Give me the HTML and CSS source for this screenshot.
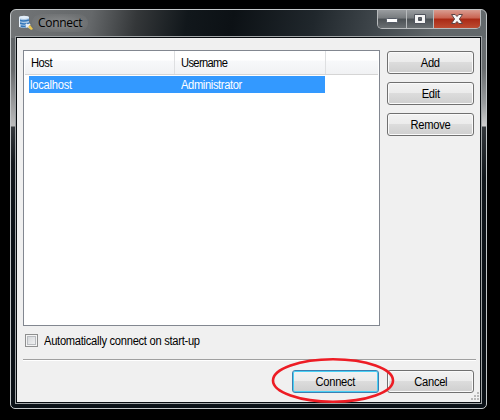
FILE: index.html
```html
<!DOCTYPE html>
<html lang="en">
<head>
<meta charset="utf-8">
<title>Connect</title>
<link rel="stylesheet" href="styles.css">
</head>
<body>
<main class="window">
  <header class="titlebar">
    <svg class="app-icon" width="16" height="16" viewBox="0 0 16 16">
      <path d="M1 2 Q6 0 11 2 V12 Q6 14 1 12Z" fill="#a9c7e4"/>
      <ellipse cx="6" cy="2.3" rx="5" ry="1.6" fill="#e2edf8"/>
      <path d="M1 5 Q5 7 11 5 M2 8 Q6 10 12 8 M3 11 Q6 12 10 11" fill="none" stroke="#3477ba" stroke-width="1.4"/>
      <path d="M1.5 3 V12" stroke="#e8f1fa"/>
      <path d="M8 9 l4 4 M8 12 l4 -3" stroke="#e9eef5" stroke-width="2"/>
      <path d="M10 12 l2 -2 l3 4 l-2 1z" fill="#edc850"/>
    </svg>
    <h1 class="title">Connect</h1>
    <div class="controls">
      <span class="control min"><svg width="12" height="12" viewBox="0 0 12 12"><rect x=".5" y="5.5" width="11" height="4" rx="1" fill="#fff" stroke="#555b66"/></svg></span>
      <span class="control max"><svg width="12" height="12" viewBox="0 0 12 12"><path d="M.5 1.5H11.5V10.5H.5Z M4.5 4.5V7.5H7.5V4.5Z" fill="#f4f4f4" fill-rule="evenodd" stroke="#50545d"/></svg></span>
      <span class="control close"><svg width="14" height="12" viewBox="0 0 14 12"><path d="M1.5 1.5H5.2L7 3.5L8.8 1.5H12.5L9.4 6L12.5 10.5H8.8L7 8.5L5.2 10.5H1.5L4.6 6Z" fill="#f7f7f7" stroke="#5d4545"/></svg></span>
    </div>
  </header>
  <section class="client">
    <div class="upper">
      <div class="list">
        <div class="row head"><span class="cell c-host"><span class="t-host">Host</span></span><span class="cell c-user"><span class="t-user">Username</span></span></div>
        <div class="row selected"><span class="cell c-host"><span class="t-local">localhost</span></span><span class="cell c-user"><span class="t-admin">Administrator</span></span></div>
      </div>
      <div class="side">
        <button class="btn"><span class="label">Add</span></button>
        <button class="btn"><span class="label">Edit</span></button>
        <button class="btn"><span class="label">Remove</span></button>
      </div>
    </div>
    <div class="option"><span class="box"></span><span class="option-text">Automatically connect on start-up</span></div>
    <div class="rule"></div>
    <div class="actions">
      <button class="btn default"><span class="label">Connect</span></button>
      <button class="btn"><span class="label">Cancel</span></button>
    </div>
    <svg class="grip" width="8" height="8" viewBox="0 0 8 8" fill="#b8b8b8"><path d="M6 0h2v2h-2zM3 3h2v2h-2zM6 3h2v2h-2zM0 6h2v2h-2zM3 6h2v2h-2zM6 6h2v2h-2z"/></svg>
  </section>
</main>
<svg class="mark" width="124" height="48" viewBox="0 0 124 48"><ellipse cx="62" cy="23.5" rx="60" ry="21.3" fill="none" stroke="#ed1c24" stroke-width="2.6"/></svg>
</body>
</html>
```
FILE: styles.css
```css
* { box-sizing: border-box; }
body {
  margin: 0;
  width: 500px;
  height: 420px;
  padding: 9px 0 0 10px;
  overflow: hidden;
  background: #000;
  font: 12px/14px "Liberation Sans", Arial, sans-serif;
  color: #000;
}
.window {
  width: 477px;
  height: 400px;
  border: 1px solid #c3c7c9;
  border-radius: 6px 6px 5px 5px;
  padding: 0 4px 4px;
  background:
    linear-gradient(#5f6366 0, #66696b 32px, #b0b1b2 80px, #bcbcbc 88px, #34383c 89px, #15191e 125px, #0b1117 200px) 0 28px / 4px 100% no-repeat,
    linear-gradient(#686d70 0, #686c6e 30px, #999c9e 65px, #d0d0d0 88px, #33373b 89px, #10161b 140px, #0b1117 230px) 100% 28px / 4px 100% no-repeat,
    linear-gradient(100deg, #717476 0, #65686a 80px, #343739 125px, #11171b 175px, #0c1115 220px, #20272c 300px, #444b50 370px, #606669 420px, #62686b 100%) 0 0 / 100% 28px no-repeat,
    #0b1117;
}
.titlebar {
  height: 26px;
  display: flex;
  align-items: flex-start;
  padding-left: 3px;
}
.app-icon { margin-top: 5px; }
.title {
  margin: 4px 0 0 -2px;
  padding: 0 6px;
  border-radius: 9px;
  background: radial-gradient(ellipse, rgba(150,152,153,.75), rgba(130,132,133,.35) 65%, transparent);
  font: 12px/18px "Open Sans", "Noto Sans", sans-serif;
  letter-spacing: -0.3px;
}
.controls {
  display: flex;
  margin-left: auto;
  margin-right: 1px;
  height: 19px;
  border: 1px solid #b8bbbd;
  border-top: 0;
  border-radius: 0 0 5px 5px;
  overflow: hidden;
}
.control {
  display: flex;
  align-items: center;
  justify-content: center;
  height: 18px;
}
.min, .max {
  background: linear-gradient(#999c9f, #777b7e 45%, #4b5054 50%, #6a6f72);
  border-right: 1px solid #b7babc;
}
.min { width: 29px; }
.max { width: 27px; }
.close {
  width: 46px;
  background: linear-gradient(#d99c90, #c96250 45%, #a92915 50%, #bd4b31);
}
.client {
  position: relative;
  width: 467px;
  height: 368px;
  border: 1px solid #a0a4a6;
  outline: 1px solid #080c10;
  outline-offset: -2px;
  background: #f0f0f0;
  padding: 13px 6px 0 7px;
}
.upper { display: flex; gap: 7px; }
.list {
  width: 357px;
  height: 276px;
  border: 1px solid #828790;
  background: #fff;
  padding-left: 1px;
}
.row { display: flex; }
.head {
  height: 24px;
  margin-right: 1px;
  border-bottom: 1px solid #d5d5d5;
  background: linear-gradient(#fff 0, #fff 40%, #f7f8fa 43%, #f1f2f4);
}
.cell { display: flex; align-items: center; white-space: nowrap; }
.cell span, .label, .option-text {
  display: inline-block;
  transform: scaleX(.93);
  letter-spacing: -.3px;
}
.cell span, .option-text { transform-origin: left; }
.head .c-host { width: 150px; padding-left: 6px; border-right: 1px solid #dedfe1; }
.head .c-user { width: 151px; padding-left: 6px; border-right: 1px solid #dedfe1; }
.selected {
  width: 296px;
  height: 17px;
  margin: 1px 0 0 4px;
  background: #39f;
  color: #fff;
}
.selected .c-host { width: 152px; padding-left: 1px; }
.cell .t-host { letter-spacing: -.5px; }
.cell .t-user { letter-spacing: -.7px; }
.cell .t-local { letter-spacing: -.25px; }
.cell .t-admin { letter-spacing: -.4px; }
.side { display: flex; flex-direction: column; gap: 8px; padding-top: 1px; }
.btn {
  width: 87px;
  height: 23px;
  padding: 0;
  border: 1px solid #707070;
  border-radius: 3px;
  box-shadow: inset 0 0 0 1px #fafafa;
  background: linear-gradient(#f2f2f2, #ebebeb 49%, #dcdcdc 50%, #cfcfcf);
  font: inherit;
  color: #000;
}
.default {
  border-color: #3c7fb1;
  box-shadow: inset 0 0 0 1px #48d0f5;
}
.option { display: flex; align-items: center; height: 13px; margin: 8px 0 0 2px; }
.box {
  width: 13px;
  height: 13px;
  border: 1px solid #8e8f8f;
  box-shadow: inset 0 0 0 1px #f4f4f4, inset 0 0 0 2px #b9bcc0;
  background: linear-gradient(135deg, #cfd2d5, #f6f6f6);
}
.option-text { margin-left: 6px; letter-spacing: -.3px; white-space: nowrap; }
.rule { width: 453px; height: 2px; margin-top: 12px; background: #a0a0a0; border-bottom: 1px solid #fff; }
.actions { display: flex; gap: 8px; margin: 9px 0 0 269px; }
.grip { position: absolute; right: 2px; bottom: 3px; }
.mark { position: absolute; left: 271px; top: 357px; }
```
